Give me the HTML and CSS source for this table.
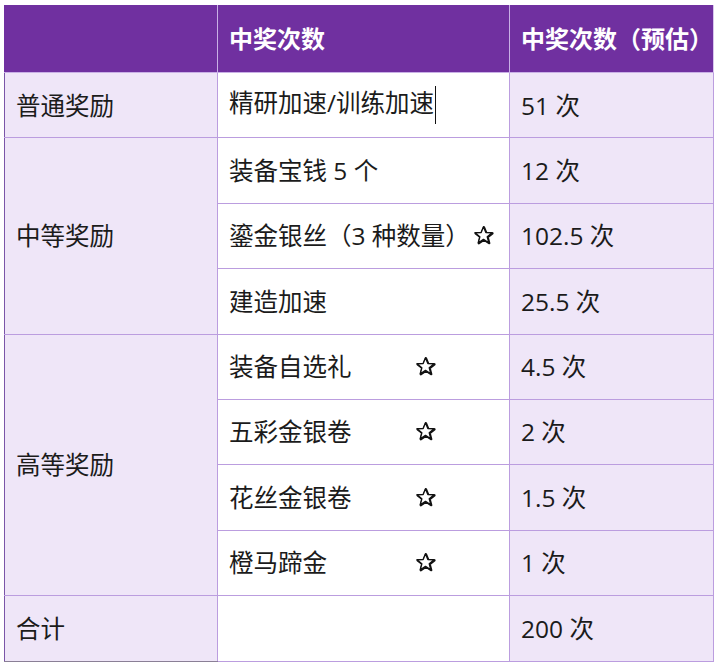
FILE: index.html
```html
<!DOCTYPE html>
<html lang="zh-CN">
<head>
<meta charset="utf-8">
<link rel="stylesheet" href="styles.css">
</head>
<body>
<svg width="0" height="0" class="defs" aria-hidden="true">
  <defs>
    <symbol id="star" viewBox="0 0 24 24">
      <path d="M12.6 2.6 L15.3 9.1 L22.4 9.5 L16.9 14 L18.7 20.9 L12.6 17.1 L6.6 20.9 L8.4 14 L2.9 9.5 L9.9 9.1 Z" fill="none" stroke="#111" stroke-width="2.4" stroke-linejoin="round"/>
      <path d="M12 2 L14.7 8.5 L21.8 8.9 L16.3 13.4 L18.1 20.3 L12 16.5 L6 20.3 L7.8 13.4 L2.3 8.9 L9.3 8.5 Z" fill="#fff" stroke="#111" stroke-width="1.6" stroke-linejoin="round"/>
    </symbol>
  </defs>
</svg>
<table class="prize">
  <colgroup>
    <col class="c1"><col class="c2"><col class="c3">
  </colgroup>
  <thead>
    <tr class="head">
      <th class="tier"></th>
      <th>中奖次数</th>
      <th>中奖次数（预估）</th>
    </tr>
  </thead>
  <tbody>
    <tr>
      <td class="tier">普通奖励</td>
      <td class="item">精研加速/训练加速<span class="caret"></span></td>
      <td class="count">51 次</td>
    </tr>
    <tr>
      <td class="tier" rowspan="3">中等奖励</td>
      <td class="item">装备宝钱 5 个</td>
      <td class="count">12 次</td>
    </tr>
    <tr>
      <td class="item">鎏金银丝（3 种数量）<svg class="star gap"><use href="#star"/></svg></td>
      <td class="count">102.5 次</td>
    </tr>
    <tr>
      <td class="item">建造加速</td>
      <td class="count">25.5 次</td>
    </tr>
    <tr>
      <td class="tier" rowspan="4">高等奖励</td>
      <td class="item"><span class="name">装备自选礼</span><svg class="star"><use href="#star"/></svg></td>
      <td class="count">4.5 次</td>
    </tr>
    <tr>
      <td class="item"><span class="name">五彩金银卷</span><svg class="star"><use href="#star"/></svg></td>
      <td class="count">2 次</td>
    </tr>
    <tr>
      <td class="item"><span class="name">花丝金银卷</span><svg class="star"><use href="#star"/></svg></td>
      <td class="count">1.5 次</td>
    </tr>
    <tr>
      <td class="item"><span class="name">橙马蹄金</span><svg class="star"><use href="#star"/></svg></td>
      <td class="count">1 次</td>
    </tr>
    <tr class="total">
      <td class="tier">合计</td>
      <td class="item"></td>
      <td class="count">200 次</td>
    </tr>
  </tbody>
</table>
</body>
</html>
```

FILE: styles.css
```css
html, body {
  margin: 0;
  background: #ffffff;
}
body {
  padding: 5px 0 0 4px;
  font-family: "Open Sans", "Noto Sans CJK SC", sans-serif;
  color: #1b1b1b;
}
.defs {
  position: absolute;
  width: 0;
  height: 0;
}
.prize {
  border-collapse: collapse;
  table-layout: fixed;
  width: 709px;
  font-size: 24.5px;
}
.c1 { width: 213px; }
.c2 { width: 292px; }
.c3 { width: 204px; }

.prize th,
.prize td {
  border: 1px solid #bb9ddf;
  padding: 0 0 0 11px;
  text-align: left;
  vertical-align: middle;
  white-space: nowrap;
  line-height: 1.2;
}
.head {
  height: 67px;
}
.head th {
  background: #7030a0;
  color: #ffffff;
  font-weight: 700;
  font-size: 24px;
  border-color: #7030a0;
  border-right-color: #c9b0e6;
  border-bottom-color: #c9b0e6;
}
.head th:last-child {
  border-right-color: #d8c6ee;
}
.prize tbody tr {
  height: 65.4px;
}
.prize td.tier,
.prize td.count {
  background: #efe6f8;
}
.prize td.item {
  background: #ffffff;
}
.prize td.tier {
  border-left: 1px solid #7a55a8;
}
.total td.tier {
  border-top-color: #5b4a70;
  border-bottom-color: #8a7f96;
}
.caret {
  display: inline-block;
  width: 1px;
  height: 38px;
  background: #111;
  vertical-align: middle;
  margin-left: 1px;
}
.name {
  display: inline-block;
  width: 186px;
}
.star {
  display: inline-block;
  width: 21px;
  height: 21px;
  vertical-align: -1px;
}
.star.gap {
  margin-left: 3px;
}
```
